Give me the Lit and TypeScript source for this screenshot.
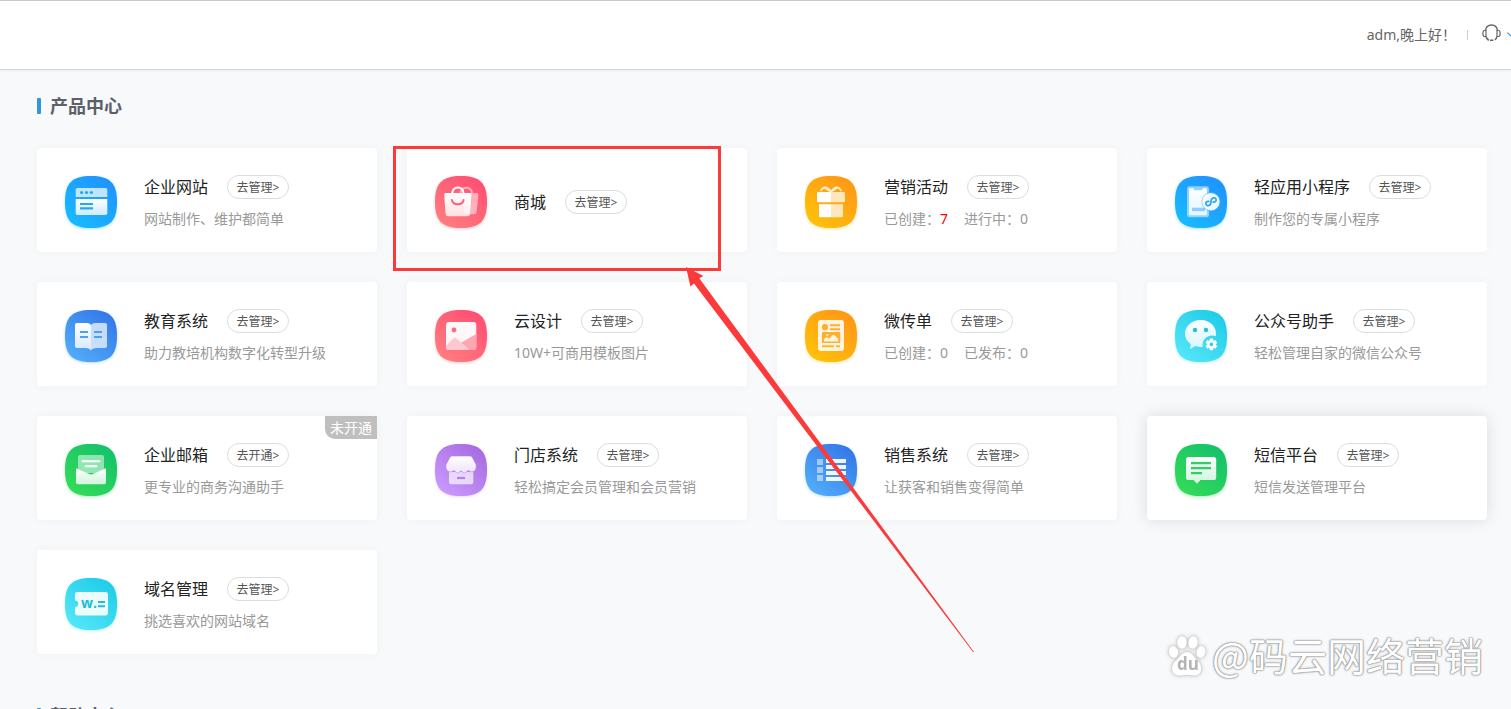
import { LitElement, html, svg, css, nothing, SVGTemplateResult } from "lit";
import { customElement, property } from "lit/decorators.js";
import { classMap } from "lit/directives/class-map.js";

interface Stat {
  label: string;
  value: number;
  hot?: boolean;
}

interface Product {
  icon: string;
  name: string;
  desc?: string;
  stats?: Stat[];
  action?: string;
  badge?: string;
  raised?: boolean;
}

const PRODUCTS: Product[] = [
  { icon: "site", name: "企业网站", desc: "网站制作、维护都简单" },
  { icon: "mall", name: "商城" },
  {
    icon: "gift",
    name: "营销活动",
    stats: [
      { label: "已创建：", value: 7, hot: true },
      { label: "进行中：", value: 0 },
    ],
  },
  { icon: "app", name: "轻应用小程序", desc: "制作您的专属小程序" },
  { icon: "edu", name: "教育系统", desc: "助力教培机构数字化转型升级" },
  { icon: "design", name: "云设计", desc: "10W+可商用模板图片" },
  {
    icon: "leaflet",
    name: "微传单",
    stats: [
      { label: "已创建：", value: 0 },
      { label: "已发布：", value: 0 },
    ],
  },
  { icon: "wechat", name: "公众号助手", desc: "轻松管理自家的微信公众号" },
  { icon: "mail", name: "企业邮箱", desc: "更专业的商务沟通助手", action: "去开通", badge: "未开通" },
  { icon: "store", name: "门店系统", desc: "轻松搞定会员管理和会员营销" },
  { icon: "sales", name: "销售系统", desc: "让获客和销售变得简单" },
  { icon: "sms", name: "短信平台", desc: "短信发送管理平台", raised: true },
  { icon: "domain", name: "域名管理", desc: "挑选喜欢的网站域名" },
];

// Tile gradients: [bottom left, top right]
const TONES: Record<string, [string, string]> = {
  blue: ["#18bdff", "#2090ff"],
  red: ["#ff8080", "#ff4b72"],
  orange: ["#ffc40a", "#ff9418"],
  royal: ["#54b0fa", "#3274e8"],
  green: ["#36dc58", "#12c06c"],
  purple: ["#cb9cff", "#a468de"],
  cyan: ["#58e8fa", "#1ccae6"],
};

const ICONS: Record<string, { tone: string; art: SVGTemplateResult }> = {
  site: {
    tone: "blue",
    art: svg`
      <path d="M12.5 12h28a1.8 1.8 0 0 1 1.8 1.8V21H10.7v-7.2a1.8 1.8 0 0 1 1.8-1.8z" fill="#fff" opacity=".72"/>
      <g fill="#22a2ff"><circle cx="16.6" cy="16.5" r="1.6"/><circle cx="21.5" cy="16.5" r="1.6"/><circle cx="26.4" cy="16.5" r="1.6"/></g>
      <path d="M10.7 23h31.6v14.2a1.8 1.8 0 0 1-1.8 1.8h-28a1.8 1.8 0 0 1-1.8-1.8z" fill="url(#sheen)"/>
      <path d="M15 28h13M15 32.3h13" stroke="#22a8ff" stroke-width="2.2"/>`,
  },
  mall: {
    tone: "red",
    art: svg`
      <path d="M25.5 17c1-7 10.5-7 11.5 0" fill="none" stroke="#fff" stroke-width="2" opacity=".5"/>
      <path d="M26 17h15.4a2 2 0 0 1 2 2.2l-1.8 17a2.2 2.2 0 0 1-2.2 2H30z" fill="#fff" opacity=".5"/>
      <path d="M17.3 18v-1a5.6 5.6 0 0 1 11.2 0v1" fill="none" stroke="#fff" stroke-width="2"/>
      <path d="M11 17h23.6a1.8 1.8 0 0 1 1.8 2l-1.4 19a2.4 2.4 0 0 1-2.4 2.3H13a2.4 2.4 0 0 1-2.4-2.3L9.2 19a1.8 1.8 0 0 1 1.8-2z" fill="url(#sheen)"/>
      <path d="M16.9 24c.8 5.6 10.9 5.6 11.7 0" fill="none" stroke="#ff5f78" stroke-width="1.9" stroke-linecap="round"/>`,
  },
  gift: {
    tone: "orange",
    art: svg`
      <path d="M26 15.8c-1.6-3.2-4.6-5.4-7-4.4-1.6.8-2.4 2.6-3.600 3.600M26 15.8c1.6-3.2 4.6-5.4 7-4.4 1.6.8 2.4 2.6 3.6 3.6M19 11.4l7 4.400 7-4.400" fill="none" stroke="#fff" stroke-width="1.5" opacity=".85"/>
      <path d="M26 16v10.3H13.2A1.2 1.2 0 0 1 12 25.1v-7.9a1.2 1.2 0 0 1 1.2-1.2zM26 28.3v13H15.2a1.2 1.2 0 0 1-1.2-1.2V28.3z" fill="#fff"/>
      <path d="M26 16v10.3h12.8a1.2 1.2 0 0 0 1.2-1.2v-7.9a1.2 1.2 0 0 0-1.2-1.2zM26 28.3v13h10.8a1.2 1.2 0 0 0 1.2-1.2V28.3z" fill="#fff" opacity=".72"/>`,
  },
  app: {
    tone: "blue",
    art: svg`
      <rect x="12" y="10.3" width="22" height="31" rx="2.4" fill="#fff" opacity=".5"/>
      <path d="M14 13.5A1.2 1.2 0 0 1 15.2 12.3H18l1.4 2h7.2l1.4-2h2.8A1.2 1.2 0 0 1 32 13.5V38a1.2 1.2 0 0 1-1.2 1.2H15.2A1.2 1.2 0 0 1 14 38z" fill="url(#sheen)"/>
      <rect x="17" y="31.7" width="13" height="3.4" fill="#8dcdff"/>
      <circle cx="36" cy="25.7" r="9.6" fill="#4db2ff" opacity=".55"/>
      <circle cx="36" cy="25.7" r="8.7" fill="#fff" opacity=".92"/>
      <path d="M33.800 25.4a2.2 2.2 0 1 0 .4 3.9c2-.8 1.8-2.2 1.8-3.600s-.2-2.800 1.8-3.600a2.2 2.2 0 1 1 .4 3.900" fill="none" stroke="#2ba2f8" stroke-width="1.7" stroke-linecap="round"/>`,
  },
  edu: {
    tone: "royal",
    art: svg`
      <path d="M11.8 13H22a4.5 4.5 0 0 1 4 2v25.3c-1.6-1.6-3.2-2.3-5.2-2.3h-9A1.8 1.8 0 0 1 10 36.2V14.8A1.8 1.8 0 0 1 11.8 13z" fill="url(#sheen)"/>
      <path d="M40.2 13H30a4.5 4.5 0 0 0-4 2v25.3c1.6-1.6 3.2-2.3 5.2-2.3h9a1.8 1.8 0 0 0 1.8-1.8V14.8a1.8 1.8 0 0 0-1.8-1.8z" fill="#fff" opacity=".7"/>
      <path d="M15 22h8M15 27h8M29 22h8M29 27h8" stroke="#4b9ff5" stroke-width="2.2"/>`,
  },
  design: {
    tone: "red",
    art: svg`
      <rect x="11" y="12" width="30.3" height="28" rx="3" fill="#fff" opacity=".95"/>
      <circle cx="19" cy="20" r="2.4" fill="#ff6b7e"/>
      <path d="M26 32.7L41.3 24v13a3 3 0 0 1-3 3h-4z" fill="#ffa5b2"/>
      <path d="M11 35.7l7.700-7.600a1.6 1.6 0 0 1 2.2 0L34.5 40H14a3 3 0 0 1-3-3z" fill="#ffc8d0"/>`,
  },
  leaflet: {
    tone: "orange",
    art: svg`
      <rect x="13" y="10" width="26" height="31" rx="3" fill="#fff" opacity=".88"/>
      <circle cx="20" cy="17.2" r="3.1" fill="#ffae30"/>
      <path d="M25 15.2h10M25 19.2h10" stroke="#ffae30" stroke-width="2"/>
      <rect x="17" y="22" width="18.3" height="11" rx="1.2" fill="#ffae30"/>
      <path d="M19 31.5v-2.2l2.6-2.2 2.4 1.600 3.600-3.700h1.800l3.800 3.700v2.800z" fill="#fff4dd"/>
      <circle cx="22.3" cy="25" r="1.1" fill="#fff4dd"/>
      <path d="M17 36.2h12M31 36.2h4" stroke="#ffb52c" stroke-width="2"/>`,
  },
  wechat: {
    tone: "cyan",
    art: svg`
      <path d="M25.7 10C17 10 10 16 10 23.8c0 4.3 2.2 8 5.8 10.4L15 39l5.400-3c1.700.6 3.500.9 5.300.9h2c-.8-6 3-11.3 9.5-11.3 1.4 0 2.7.2 3.8.7C42.2 16.8 35 10 25.7 10z" fill="url(#sheen)"/>
      <g fill="#22c2de"><circle cx="20" cy="20" r="2.2"/><circle cx="31" cy="20" r="2.2"/></g>
      <g stroke="#fff" stroke-width="3.4"><path d="M36.4 28.6v11.600M31.4 31.5l10 5.800M31.4 37.3l10-5.800"/></g>
      <circle cx="36.4" cy="34.4" r="4.3" fill="#fff"/>
      <circle cx="36.4" cy="34.4" r="1.8" fill="#30cde6"/>`,
  },
  mail: {
    tone: "green",
    art: svg`
      <path d="M15 11h22a2 2 0 0 1 2 2v16H13V13a2 2 0 0 1 2-2z" fill="#fff" opacity=".5"/>
      <path d="M17.5 17.3h17M20.5 22.3h11" stroke="#fff" stroke-width="2" stroke-linecap="round"/>
      <path d="M11 24.2l13.8 6.100a3 3 0 0 0 2.400 0L41 24.2V38.5a1.7 1.7 0 0 1-1.7 1.7H12.7A1.7 1.7 0 0 1 11 38.5z" fill="url(#sheen)"/>`,
  },
  store: {
    tone: "purple",
    art: svg`
      <path d="M14 28h24.3v10.3a1.9 1.9 0 0 1-1.9 1.9H15.9a1.9 1.9 0 0 1-1.9-1.9z" fill="#fff" opacity=".68"/>
      <path d="M17.4 12h17.4a3 3 0 0 1 2.5 1.4l3.700 7c.8 3.800-.7 7.300-4 7.500-2.400 0-3.300-1.400-3.800-1.400-.8 0-1.700 2.400-3.600 2.400s-2.700-1.800-3.500-1.800-1.700 1.800-3.600 1.800-2.700-2.400-3.500-2.400-1.500 1.400-3.900 1.400c-3.300-.2-4.800-3.700-4-7.500l3.800-7a3 3 0 0 1 2.5-1.400z" fill="url(#sheen)" stroke="#b67eea" stroke-width=".6"/>
      <path d="M22 34h8" stroke="#b67eea" stroke-width="2.2"/>`,
  },
  sales: {
    tone: "royal",
    art: svg`
      <path d="M12 15h6v6h-6zM12 23h6v6h-6zM12 31h6v6h-6z" fill="#fff" opacity=".5"/>
      <path d="M21 15h20v3.9H21zM21 21h20v3.9H21zM21 27h20v3.9H21zM21 33h20v3.9H21z" fill="#fff" opacity=".92"/>`,
  },
  sms: {
    tone: "green",
    art: svg`
      <path d="M13.6 13h25a2.6 2.6 0 0 1 2.6 2.6v17.8a2.6 2.6 0 0 1-2.6 2.6H25.5L22 39.8 18.5 36h-4.900a2.6 2.6 0 0 1-2.6-2.6V15.6A2.6 2.6 0 0 1 13.6 13z" fill="url(#sheen)"/>
      <path d="M16 19.2h20M16 24.2h20M16 29.2h11" stroke="#2fd160" stroke-width="2.2"/>`,
  },
  domain: {
    tone: "cyan",
    art: svg`
      <path d="M12.4 14h28.2a2.4 2.4 0 0 1 2.4 2.4V35a2.4 2.4 0 0 1-2.4 2.4H12.4A2.4 2.4 0 0 1 10 35v-6a3.1 3.1 0 0 0 0-6.4v-6.2A2.4 2.4 0 0 1 12.4 14z" fill="#fff" opacity=".9"/>
      <text x="16" y="30" class="glyph">w.</text>
      <path d="M33 24h7M33 28.3h7" stroke="#20bcd8" stroke-width="2"/>`,
  },
};

@customElement("product-icon")
class ProductIcon extends LitElement {
  @property() name = "site";

  static styles = css`
    :host {
      display: block;
      width: 52px;
      height: 52px;
      flex: none;
    }
    .tile {
      display: block;
      overflow: visible;
    }
    .glyph {
      font: 700 14px "Open Sans", sans-serif;
      fill: #20bcd8;
    }
  `;

  render() {
    const { tone, art } = ICONS[this.name];
    const [low, high] = TONES[tone];
    const shape = "M26 0C45 0 52 7 52 26S45 52 26 52 0 45 0 26 7 0 26 0z";
    return html`<svg class="tile" width="52" height="52" viewBox="0 0 52 52" aria-hidden="true">
      <defs>
        <linearGradient id="tone" x1="0.1" y1="1" x2="0.9" y2="0">
          <stop offset="0" stop-color=${low} />
          <stop offset="1" stop-color=${high} />
        </linearGradient>
        <linearGradient id="sheen" x1="0" y1="0" x2="0" y2="1">
          <stop offset="0" stop-color="#fff" />
          <stop offset="1" stop-color="#fff" stop-opacity=".78" />
        </linearGradient>
        <filter id="blur" x="-20%" y="-20%" width="140%" height="140%">
          <feGaussianBlur stdDeviation="1.6" />
        </filter>
      </defs>
      <path d=${shape} fill=${low} opacity=".4" filter="url(#blur)" transform="translate(0 1)" />
      <path d=${shape} fill="url(#tone)" />
      ${art}
    </svg>`;
  }
}

@customElement("product-card")
class ProductCard extends LitElement {
  @property({ attribute: false }) product!: Product;

  static styles = css`
    :host {
      display: grid;
    }
    .card {
      position: relative;
      display: flex;
      align-items: center;
      gap: 27px;
      padding: 27px 28px 23px;
      background: #fff;
      border-radius: 4px;
      box-shadow: 0 0 10px rgba(0, 0, 0, 0.04);
    }
    .raised {
      box-shadow: 0 0 16px rgba(0, 0, 0, 0.12);
    }
    .body {
      display: flex;
      flex-direction: column;
      gap: 10px;
      min-width: 0;
      white-space: nowrap;
    }
    .head {
      display: flex;
      align-items: center;
      gap: 19px;
    }
    .name {
      margin: 0;
      font-size: 16px;
      line-height: 24px;
      font-weight: 400;
      color: #222;
    }
    .go {
      box-sizing: border-box;
      min-width: 62px;
      height: 24px;
      padding: 2px 8px 0;
      border: 1px solid #dcdcdc;
      border-radius: 12px;
      background: #fff;
      color: #555;
      font: inherit;
      font-size: 12px;
      line-height: 20px;
      cursor: pointer;
    }
    .desc {
      display: flex;
      gap: 16px;
      margin: 0;
      font-size: 14px;
      line-height: 20px;
      color: #999;
    }
    .hot {
      color: #f00;
    }
    .badge {
      position: absolute;
      top: 0;
      right: 0;
      padding: 0 5px;
      border-bottom-left-radius: 10px;
      background: #bfbfbf;
      color: #fff;
      font-size: 14px;
      line-height: 23px;
    }
  `;

  render() {
    const p = this.product;
    return html`<article class=${classMap({ card: true, raised: !!p.raised })}>
      <product-icon name=${p.icon}></product-icon>
      <div class="body">
        <div class="head">
          <h3 class="name">${p.name}</h3>
          <button class="go" type="button">${p.action ?? "去管理"}&gt;</button>
        </div>
        ${p.desc ? html`<p class="desc">${p.desc}</p>` : nothing}
        ${p.stats
          ? html`<p class="desc">
              ${p.stats.map(
                (s) => html`<span>${s.label}<span class=${classMap({ hot: !!s.hot })}>${s.value}</span></span>`
              )}
            </p>`
          : nothing}
      </div>
      ${p.badge ? html`<span class="badge">${p.badge}</span>` : nothing}
    </article>`;
  }
}

@customElement("app-root")
class AppRoot extends LitElement {
  static styles = css`
    :host {
      position: relative;
      display: block;
      height: 100vh;
      overflow: hidden;
      background: #f8f9fb;
      font-family: "Noto Sans", "Noto Sans CJK SC", sans-serif;
      color: #666;
    }
    .topbar {
      box-sizing: border-box;
      display: flex;
      align-items: center;
      justify-content: flex-end;
      height: 70px;
      border-top: 1px solid #c9c9c9;
      border-bottom: 1px solid #d3d5d8;
      background: #fff;
      box-shadow: 0 1px 2px rgba(0, 0, 0, 0.05);
      font-size: 14px;
      line-height: 20px;
    }
    .divider {
      width: 1px;
      height: 10px;
      margin: 0 14px 0 11px;
      background: #ccc;
    }
    .support {
      display: flex;
      align-items: center;
      gap: 6px;
      margin-right: -6px;
      padding: 0;
      border: 0;
      background: none;
      cursor: pointer;
    }
    .headset {
      margin-bottom: 4px;
    }
    .content {
      padding: 24px 24px 0 37px;
    }
    .section {
      margin-bottom: 50px;
    }
    .title {
      display: flex;
      align-items: center;
      gap: 9px;
      margin: 0 0 30px;
      font-size: 18px;
      line-height: 24px;
      height: 24px;
      font-weight: 700;
      color: #5d6068;
    }
    .title::before {
      content: "";
      width: 4px;
      height: 16px;
      border-radius: 1px;
      background: #3296dc;
    }
    .grid {
      display: grid;
      grid-template-columns: repeat(4, minmax(0, 1fr));
      gap: 30px;
    }
    .marks {
      position: absolute;
      top: 0;
      left: 0;
      pointer-events: none;
    }
    .watermark {
      position: absolute;
      right: 28px;
      bottom: 30px;
      display: flex;
      align-items: center;
      gap: 6px;
      pointer-events: none;
      color: #fff;
      font-family: "Noto Sans CJK SC", sans-serif;
      font-size: 39px;
      line-height: 50px;
      text-shadow: 0 0 1px #888, 0 0 1px #888, 0 0 2px #999, 0 0 3px #bbb;
    }
    .paw {
      margin-top: 4px;
      filter: drop-shadow(0 0 1px #bbb) drop-shadow(0 0 2px #ccc);
      overflow: visible;
    }
    .du {
      font: 700 17px "Open Sans", sans-serif;
      fill: #b4b4b4;
      text-shadow: none;
    }
  `;

  render() {
    return html`
      <header class="topbar">
        <span>adm,晚上好！</span>
        <span class="divider"></span>
        <button class="support" type="button" aria-label="客服">
          <svg class="headset" width="19" height="18" viewBox="0 0 19 18" fill="none" stroke="#666" stroke-width="1.4">
            <path d="M3.5 6.5C4 3 6.5 1 9.5 1s5.500 2 6 5.500" />
            <path d="M4 6.5H2.4C1.4 6.5.9 7.6.9 9.5s.5 3 1.5 3H4zM15 6.5h1.6c1 0 1.5 1.1 1.5 3s-.5 3-1.5 3H15z" stroke-width="1.2" />
            <path d="M4 12.5c.5 2 1.500 3.300 3 3.600M15 12.5c-.4 1.800-1 2.800-2.200 3.300M8 16.3h3.400" />
          </svg>
          <svg width="10" height="6" viewBox="0 0 10 6" fill="none" stroke="#3296dc" stroke-width="1.2">
            <path d="M.4.6L5 5 9.600.6" />
          </svg>
        </button>
      </header>
      <main class="content">
        <section class="section">
          <h2 class="title">产品中心</h2>
          <div class="grid">
            ${PRODUCTS.map((p) => html`<product-card .product=${p}></product-card>`)}
          </div>
        </section>
        <section class="section">
          <h2 class="title">帮助中心</h2>
        </section>
      </main>
      <svg class="marks" width="980" height="660" aria-hidden="true">
        <rect x="394.5" y="147.5" width="325" height="122" fill="none" stroke="#fc3a3a" stroke-width="3" />
        <path d="M686 267l17.5 9-4.300 2.300L974 652h-1L694 283.600l-3.600 3z" fill="#fc3a3a" />
      </svg>
      <div class="watermark">
        <svg class="paw" width="38" height="42" viewBox="0 0 38 42" fill="#fff">
          <ellipse cx="5.5" cy="17" rx="4.6" ry="6" transform="rotate(-12 5.5 17)" />
          <ellipse cx="14" cy="7.5" rx="4.7" ry="6.2" />
          <ellipse cx="25" cy="7.5" rx="4.7" ry="6.2" transform="rotate(8 25 7.5)" />
          <ellipse cx="33" cy="17" rx="4.4" ry="6" transform="rotate(12 33 17)" />
          <path d="M19 17c5 0 7 5 11 9 5 5 4.5 14-3 14.5-3 0-5-.8-8-.8s-5 .8-8 .8c-8 0-9-9.5-3.500-14.5C12 22 14 17 19 17z" />
          <text class="du" x="9" y="35">du</text>
        </svg>
        <span>@码云网络营销</span>
      </div>
    `;
  }
}
